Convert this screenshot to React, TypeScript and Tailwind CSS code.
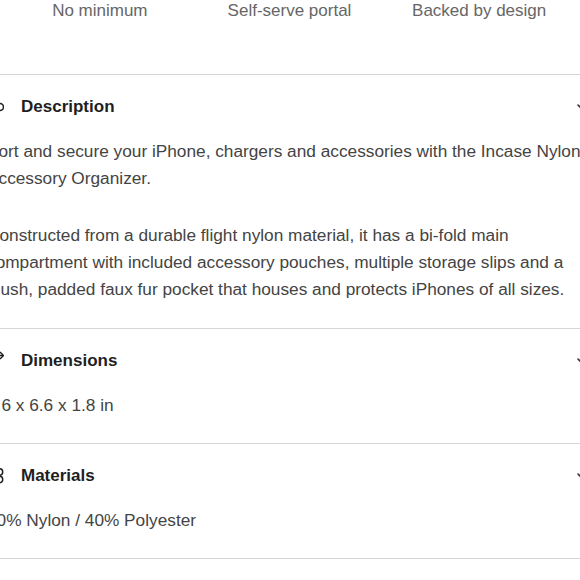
import React from "react";

const font = { fontFamily: '"Liberation Sans", Arial, Helvetica, sans-serif' };

function Chevron() {
  return (
    <svg width="12" height="12" viewBox="0 0 12 12" fill="none" stroke="#333" strokeWidth="1.6" strokeLinecap="round" strokeLinejoin="round">
      <polyline points="1,4 6,9 11,4" />
    </svg>
  );
}

function IconDesc() {
  return (
    <svg width="20" height="20" viewBox="0 0 20 20" fill="none" stroke="#222" strokeWidth="1.6">
      <circle cx="16" cy="10" r="3.5" />
      <rect x="2" y="2" width="10" height="16" rx="2" />
    </svg>
  );
}

function IconDim() {
  return (
    <svg width="20" height="20" viewBox="0 0 20 20" fill="none" stroke="#222" strokeWidth="1.5" strokeLinejoin="round">
      <polyline points="16,1 19.5,4.5 16,8" />
      <line x1="2" y1="4.5" x2="19" y2="4.5" />
    </svg>
  );
}

function IconMat() {
  return (
    <svg width="20" height="20" viewBox="0 0 20 20" fill="none" stroke="#222" strokeWidth="1.5">
      <circle cx="15.5" cy="6" r="3.2" />
      <circle cx="15.5" cy="13.5" r="3.2" />
    </svg>
  );
}

function Section({ icon, title, tight, children }: { icon: React.ReactNode; title: string; tight?: boolean; children: React.ReactNode }) {
  return (
    <div className="border-t border-[#d6d6d6]">
      <div className="flex items-center h-[63px] pl-[24px] pr-[31px]">
        <div className="w-5 h-5 flex-none">{icon}</div>
        <div className="ml-[17px] text-[17px] font-bold text-[#1f1f1f] flex-1">{title}</div>
        <Chevron />
      </div>
      <div className={tight ? "pl-[27px] pb-[24px]" : "pl-[27px] pb-[25px]"}>
        <div className="w-[610px] text-[17.25px] leading-[27px] text-[#444]">{children}</div>
      </div>
    </div>
  );
}

export default function App() {
  return (
    <div className="w-[580px] h-[580px] overflow-hidden bg-white" style={font}>
      <div className="h-[74px] ml-[5px] w-[569px] grid grid-cols-3 pt-[1px] text-[17px] leading-[20px] text-[#666]">
        <div className="text-center">No minimum</div>
        <div className="text-center">Self-serve portal</div>
        <div className="text-center">Backed by design</div>
      </div>
      <div className="-ml-[40px] w-[660px] border-b border-[#d6d6d6]">
        <Section icon={<IconDesc />} title="Description">
          <p>Sort and secure your iPhone, chargers and accessories with the Incase Nylon Accessory Organizer.</p>
          <p className="mt-[30px]">
            Constructed from a durable flight nylon material, it has a bi-fold main compartment with included accessory pouches, multiple storage slips and a plush, padded faux fur pocket that houses and protects iPhones of all sizes.
          </p>
        </Section>
        <Section icon={<IconDim />} title="Dimensions" tight>
          <p>9.6 x 6.6 x 1.8 in</p>
        </Section>
        <Section icon={<IconMat />} title="Materials" tight>
          <p>60% Nylon / 40% Polyester</p>
        </Section>
      </div>
    </div>
  );
}
